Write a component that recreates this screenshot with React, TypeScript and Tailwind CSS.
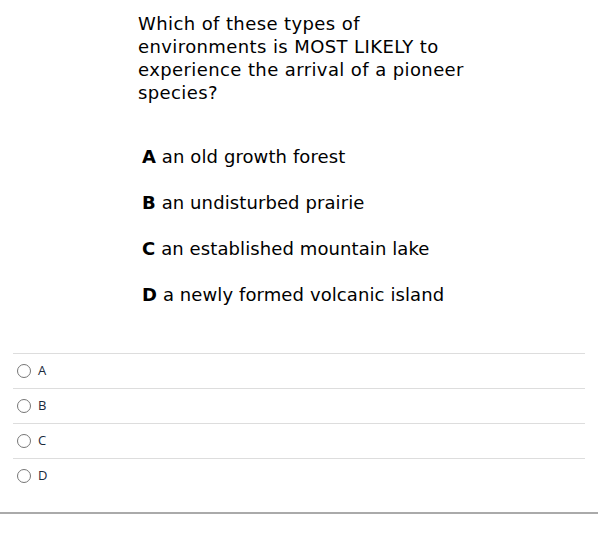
const options = [
  { letter: 'A', text: 'an old growth forest' },
  { letter: 'B', text: 'an undisturbed prairie' },
  { letter: 'C', text: 'an established mountain lake' },
  { letter: 'D', text: 'a newly formed volcanic island' },
];

export default function App() {
  return (
    <div className="w-[598px] h-[533px] bg-white text-black">
      {/* stem */}
      <div className="pl-[138px] pt-[12px] font-['DejaVu_Sans',Verdana,sans-serif]">
        <p className="w-[335px] text-[18px] leading-[23px] tracking-[0.4px]">
          Which of these types of environments is MOST LIKELY to experience the arrival of a pioneer species?
        </p>
        <div className="pl-[4px] pt-[41px] flex flex-col gap-[23px]">
          {options.map((o) => (
            <p key={o.letter} className="text-[18px] leading-[23px] tracking-[0.1px]">
              <span className="font-bold">{o.letter}</span> {o.text}
            </p>
          ))}
        </div>
      </div>

      {/* answer choices */}
      <div className="mt-[47px] ml-[13px] w-[572px] font-['Open_Sans',sans-serif]">
        {options.map((o) => (
          <label
            key={o.letter}
            className="h-[35px] flex items-center gap-[7px] border-t border-[#dddddd] pl-[4px]"
          >
            <span className="w-[14px] h-[14px] rounded-full border border-[#767676] bg-white" />
            <span className="text-[13px] text-[#1b2a3c]">{o.letter}</span>
          </label>
        ))}
      </div>
      <div className="mt-[19px] border-t-2 border-[#aaaaaa]" />
    </div>
  );
}
